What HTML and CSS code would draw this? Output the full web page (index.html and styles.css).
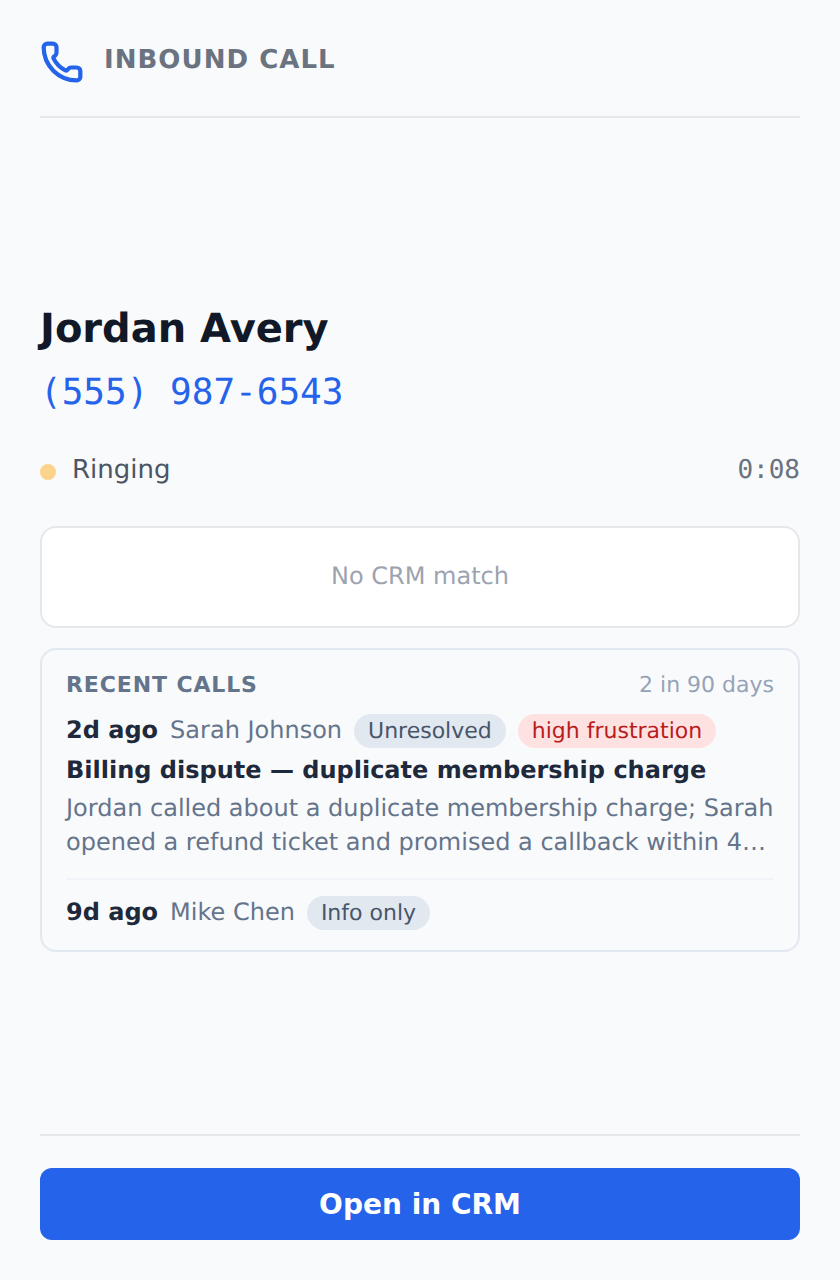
FILE: index.html
```html
<!DOCTYPE html>
<html lang="en">
<head>
<meta charset="utf-8">
<title>Inbound call</title>
<link rel="stylesheet" href="styles.css">
</head>
<body>
<div class="panel">
  <header class="header">
    <svg class="phone-icon" viewBox="0 0 24 24" fill="none" stroke="currentColor" stroke-width="2.3" stroke-linecap="round" stroke-linejoin="round"><path d="M13.832 16.568a1 1 0 0 0 1.213-.303l.355-.465A2 2 0 0 1 17 15h3a2 2 0 0 1 2 2v3a2 2 0 0 1-2 2A18 18 0 0 1 2 4a2 2 0 0 1 2-2h3a2 2 0 0 1 2 2v3a2 2 0 0 1-.8 1.6l-.468.351a1 1 0 0 0-.292 1.233 14 14 0 0 0 6.392 6.384"/></svg>
    <span class="header-title">INBOUND CALL</span>
  </header>
  <main class="main">
    <h1 class="name">Jordan Avery</h1>
    <div class="number">(555) 987-6543</div>
    <div class="status">
      <div class="status-left"><span class="dot"></span><span class="status-text">Ringing</span></div>
      <span class="timer">0:08</span>
    </div>
    <div class="crm-card">No CRM match</div>
    <section class="recent">
      <div class="recent-head"><span class="recent-title">RECENT CALLS</span><span class="recent-count">2 in 90 days</span></div>
      <div class="call first">
        <div class="call-row"><span class="when">2d ago</span><span class="agent">Sarah Johnson</span><span class="pill">Unresolved</span><span class="pill red">high frustration</span></div>
        <div class="subject">Billing dispute — duplicate membership charge</div>
        <p class="summary">Jordan called about a duplicate membership charge; Sarah opened a refund ticket and promised a callback within 4…</p>
      </div>
      <div class="call">
        <div class="call-row"><span class="when">9d ago</span><span class="agent">Mike Chen</span><span class="pill">Info only</span></div>
      </div>
    </section>
  </main>
  <footer class="footer"><button class="cta">Open in CRM</button></footer>
</div>
</body>
</html>
```
FILE: styles.css
```css
* { box-sizing: border-box; }
html, body { margin: 0; height: 100%; }
body { background: #f9fafb; font-family: "DejaVu Sans", sans-serif; color: #111827; text-rendering: geometricPrecision; }
.panel { height: 1280px; padding: 40px 40px 40px; display: flex; flex-direction: column; }
.header { display: flex; align-items: flex-start; gap: 20px; padding-bottom: 32px; border-bottom: 2px solid #e5e7eb; }
.phone-icon { width: 44px; height: 44px; color: #2563eb; flex: none; }
.header-title { font-size: 26px; line-height: 40px; font-weight: 700; letter-spacing: 1.04px; color: #6b7280; }
.main { flex: 1; display: flex; flex-direction: column; justify-content: center; min-height: 0; padding-top: 5px; }
.name { margin: 0 0 18px; font-size: 40px; line-height: 48px; font-weight: 700; color: #111827; }
.number { font-family: "DejaVu Sans Mono", monospace; font-size: 36px; line-height: 44px; color: #2563eb; margin-bottom: 38px; }
.status { display: flex; justify-content: space-between; align-items: center; height: 33px; padding-top: 1px; margin-bottom: 40px; }
.status-left { display: flex; align-items: center; gap: 16px; }
.dot { width: 16px; height: 16px; border-radius: 50%; background: #fbd38d; margin-top: 4px; }
.status-text { font-size: 26px; color: #4b5563; }
.timer { font-family: "DejaVu Sans Mono", monospace; font-size: 26px; color: #6b7280; }
.crm-card { height: 102px; border: 2px solid #e5e7eb; border-radius: 16px; background: #fff; display: flex; align-items: center; justify-content: center; padding-bottom: 2px; font-size: 24px; color: #9ca3af; margin-bottom: 20px; }
.recent { border: 2px solid #e2e8f0; border-radius: 16px; padding: 20px 24px 20px; }
.recent-head { display: flex; justify-content: space-between; align-items: center; height: 30px; margin-bottom: 14px; }
.recent-title { font-size: 22px; font-weight: 700; letter-spacing: 0.88px; color: #64748b; }
.recent-count { font-size: 22px; color: #94a3b8; }
.call-row { display: flex; align-items: baseline; gap: 12px; height: 34px; white-space: nowrap; }
.when { font-size: 24px; font-weight: 700; color: #1e293b; }
.agent { font-size: 24px; color: #64748b; }
.pill { font-size: 22px; height: 34px; line-height: 36px; padding: 0 14px; border-radius: 17px; background: #e2e8f0; color: #475569; }
.pill.red { background: #fee2e2; color: #b91c1c; }
.subject { font-size: 24px; font-weight: 700; color: #1e293b; line-height: 32px; margin-top: 6px; }
.summary { margin: 5px 0 0; font-size: 24px; line-height: 34px; color: #64748b; }
.call.first { padding-bottom: 19px; border-bottom: 2px solid #f1f5f9; margin-bottom: 16px; }
.footer { border-top: 2px solid #e5e7eb; padding-top: 32px; }
.cta { display: block; width: 100%; height: 72px; border: 0; border-radius: 12px; background: #2563eb; color: #fff; font-family: inherit; font-size: 28px; font-weight: 700; }
```
